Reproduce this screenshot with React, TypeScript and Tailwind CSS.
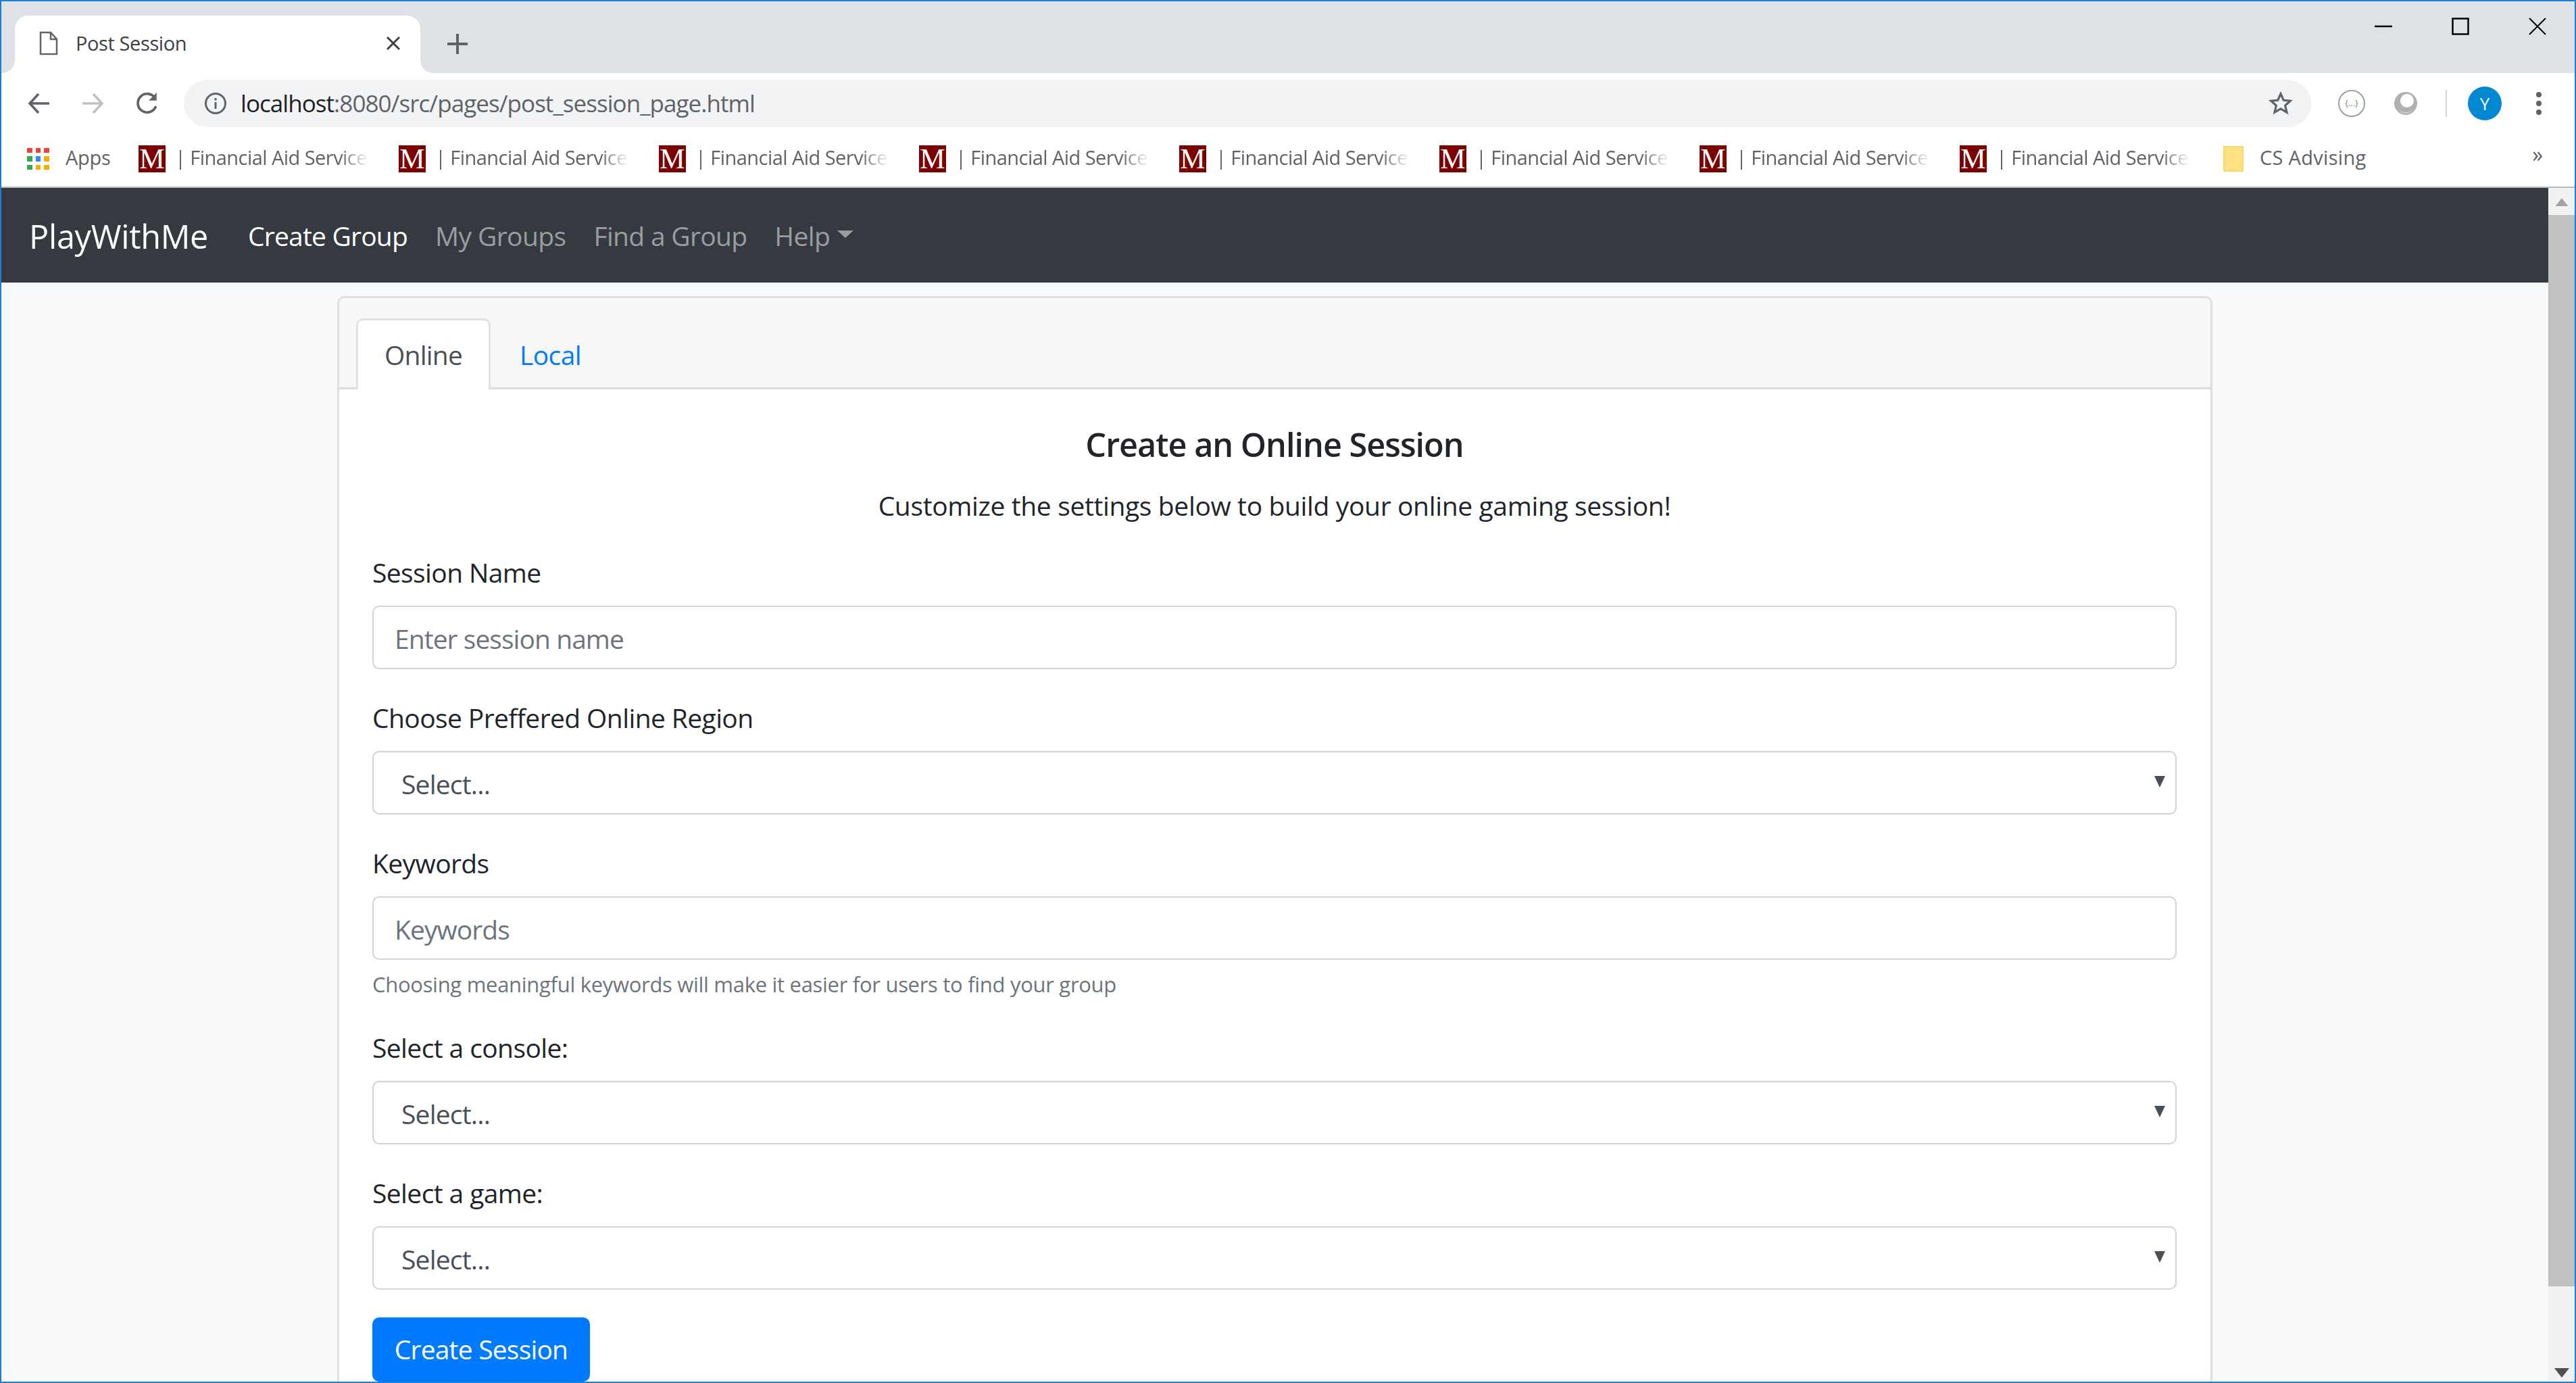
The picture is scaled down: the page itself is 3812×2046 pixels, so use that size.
const font = "font-['Open_Sans','Noto_Sans',sans-serif]"

function BookmarkM() {
  return (
    <div className="flex items-center w-[385px] shrink-0">
      <div className="w-[40px] h-[40px] bg-[#7d0000] flex items-center justify-center text-white font-['Liberation_Serif',serif] text-[42px] leading-none shrink-0">M</div>
      <span className="ml-[14px] w-[287px] pb-[4px] whitespace-nowrap text-[29px] tracking-[-0.55px] text-[#5f6368] [mask-image:linear-gradient(to_right,black_85%,transparent)]">| Financial Aid Service</span>
    </div>
  )
}

function AppsIcon() {
  const colors = ['#ef4136', '#ef4136', '#ef4136', '#34a853', '#2b8cf5', '#f9ab00', '#34a853', '#f9ab00', '#f9ab00']
  return (
    <div className="grid grid-cols-3 gap-[5px] w-[33px] shrink-0">
      {colors.map((c, i) => <span key={i} className="w-[7.5px] h-[7.5px]" style={{ background: c }} />)}
    </div>
  )
}

function ToolbarIcons() {
  return (
    <>
      <svg width="34" height="34" viewBox="0 0 34 34" className="ml-[39px] shrink-0" fill="none" stroke="#5f6368" strokeWidth="3.5"><path d="M32 17H3M16 3 3 17l13 14" /></svg>
      <svg width="34" height="34" viewBox="0 0 34 34" className="ml-[45px] shrink-0" fill="none" stroke="#bdc1c6" strokeWidth="3.5"><path d="M2 17h29M18 3l13 14-13 14" /></svg>
      <svg width="36" height="36" viewBox="0 0 34 34" className="ml-[46px] shrink-0" fill="none" stroke="#5f6368" strokeWidth="3.5"><path d="M29 21a13 13 0 1 1-1-11" /><path d="M30 2v11H19" fill="#5f6368" stroke="none" /></svg>
    </>
  )
}

function FormLabel({ children }: { children: React.ReactNode }) {
  return <label className="block h-[58px] mb-[20px] text-[39px] leading-[58px] tracking-[-0.6px] text-[#212529]">{children}</label>
}

function TextField({ placeholder }: { placeholder: string }) {
  return (
    <input
      placeholder={placeholder}
      className="block w-full h-[94px] px-[31px] pt-[3px] bg-white border-[2.5px] border-[#ced4da] rounded-[10px] text-[39px] tracking-[-0.95px] text-[#495057] placeholder-[#6c757d] outline-none"
    />
  )
}

function SelectField() {
  return (
    <div className="relative h-[94px]">
      <select className="block w-full h-full pl-[41px] pt-[4px] bg-white border-[2.5px] border-[#ced4da] rounded-[10px] text-[39px] tracking-[-0.8px] text-[#495057] appearance-none outline-none">
        <option>Select...</option>
      </select>
      <svg width="16" height="17" viewBox="0 0 16 17" className="absolute right-[17px] top-[37px]"><path d="M0 0h16L8 17z" fill="#495057" /></svg>
    </div>
  )
}

export default function App() {
  return (
    <div className={`${font} w-[3812px] h-[2046px] overflow-hidden flex flex-col border-[2px] border-[#1a7fd6] bg-white`}>
      {/* tab strip */}
      <div className="h-[106px] shrink-0 bg-[#dee1e6] flex items-end pl-[20px] relative">
        <div className="relative w-[600px] h-[85px] bg-white rounded-t-[20px] flex items-center pl-[36px] pr-[28px] pb-[3px]">
          <svg width="28" height="36" viewBox="0 0 28 36" fill="none" stroke="#5f6368" strokeWidth="2.5" className="shrink-0"><path d="M2 2h15l9 10v22H2zM17 2v10h9" /></svg>
          <span className="ml-[26px] text-[29px] tracking-[-0.4px] text-[#3c4043]">Post Session</span>
          <svg width="24" height="24" viewBox="0 0 24 24" className="ml-auto" fill="none" stroke="#3c4043" strokeWidth="3"><path d="M3 3l18 18M21 3 3 21" /></svg>
          <svg width="20" height="20" viewBox="0 0 20 20" className="absolute left-[-20px] bottom-0"><path d="M20 0v20H0C12 20 20 12 20 0z" fill="#fff" /></svg>
          <svg width="20" height="20" viewBox="0 0 20 20" className="absolute right-[-20px] bottom-0"><path d="M0 0v20h20C8 20 0 12 0 0z" fill="#fff" /></svg>
        </div>
        <svg width="32" height="32" viewBox="0 0 32 32" className="ml-[39px] mb-[27px]" fill="none" stroke="#5f6368" strokeWidth="4"><path d="M16 1v30M1 16h30" /></svg>
        <div className="absolute right-[42px] top-[24px] flex items-center">
          <svg width="26" height="26" viewBox="0 0 26 26" className="mr-[88px]" stroke="#000" strokeWidth="2.5"><path d="M0 13h26" /></svg>
          <svg width="26" height="26" viewBox="0 0 26 26" className="mr-[88px]" fill="none" stroke="#000" strokeWidth="2.5"><path d="M1.5 1.5h23v23h-23z" /></svg>
          <svg width="26" height="26" viewBox="0 0 26 26" stroke="#000" strokeWidth="2"><path d="M1 1l24 24M25 1 1 25" /></svg>
        </div>
      </div>

      {/* toolbar */}
      <div className="h-[90px] shrink-0 bg-white flex items-center">
        <ToolbarIcons />
        <div className="ml-[36px] w-[3148px] h-[70px] rounded-[35px] bg-[#f1f3f4] flex items-center pl-[30px] pr-[26px] shrink-0">
          <svg width="34" height="34" viewBox="0 0 34 34" fill="none" stroke="#5f6368" strokeWidth="3"><circle cx="17" cy="17" r="14.5" /><path d="M17 15v10M17 9v3.5" /></svg>
          <span className="ml-[20px] text-[35px] tracking-[-0.95px] text-[#202124]">localhost<span className="text-[#5f6368]">:8080/src/pages/post_session_page.html</span></span>
          <svg width="38" height="38" viewBox="0 0 24 24" className="ml-auto" fill="none" stroke="#5f6368" strokeWidth="2"><path d="m12 3 2.7 6 6.3.6-4.8 4.3 1.5 6.5L12 17l-5.7 3.4 1.5-6.5L3 9.6 9.3 9z" /></svg>
        </div>
        <div className="ml-[40px] w-[40px] h-[40px] rounded-full border-[2px] border-[#9aa0a6] flex items-center justify-center text-[13px] text-[#80868b] shrink-0">{'{...}'}</div>
        <svg width="36" height="40" viewBox="0 0 36 40" className="ml-[42px] shrink-0"><circle cx="18" cy="20" r="17" fill="#b0b0b0" /><ellipse cx="20" cy="16" rx="10" ry="10" fill="#fff" /><path d="M6 28a17 17 0 0 0 24 0 14 14 0 0 1-24 0z" fill="#d0d0d0" /></svg>
        <div className="ml-[41px] w-[2px] h-[40px] bg-[#d5d7da] shrink-0" />
        <div className="ml-[31px] w-[50px] h-[50px] rounded-full bg-[#0288d1] flex items-center justify-center text-white text-[26px] shrink-0">Y</div>
        <div className="ml-[51px] flex flex-col gap-[5px] shrink-0">
          <span className="w-[8px] h-[8px] rounded-full bg-[#5f6368]" />
          <span className="w-[8px] h-[8px] rounded-full bg-[#5f6368]" />
          <span className="w-[8px] h-[8px] rounded-full bg-[#5f6368]" />
        </div>
      </div>

      {/* bookmarks */}
      <div className="h-[80px] shrink-0 bg-white border-b-[2px] border-[#b9babd] flex items-center pl-[38px] pb-[4px] relative">
        <AppsIcon />
        <span className="ml-[24px] w-[108px] pb-[4px] text-[29px] tracking-[-0.3px] text-[#5f6368] shrink-0">Apps</span>
        {[0, 1, 2, 3, 4, 5, 6, 7].map((i) => <BookmarkM key={i} />)}
        <svg width="30" height="40" viewBox="0 0 30 40" className="ml-[5px] shrink-0" fill="#ffe082" stroke="#fbd66a" strokeWidth="2"><path d="M1 2h28v36H1z" /></svg>
        <span className="ml-[24px] pb-[4px] text-[29px] tracking-[0.3px] text-[#5f6368]">CS Advising</span>
        <span className="absolute right-[47px] top-[14px] text-[32px] leading-none text-[#5f6368]">»</span>
      </div>

      {/* page */}
      <div className="flex-1 min-h-0 flex">
        <div className="flex-1 min-w-0 bg-[#f8f9fa] flex flex-col">
          <nav className="h-[140px] pt-[3px] shrink-0 bg-[#343a40] flex items-center pl-[41px]">
            <span className="text-[48.6px] tracking-[-0.3px] text-white">PlayWithMe</span>
            <span className="ml-[59px] text-[39px] tracking-[-0.8px] text-white">Create Group</span>
            <span className="ml-[41px] text-[39px] tracking-[-0.6px] text-[#9a9da0]">My Groups</span>
            <span className="ml-[41px] text-[39px] tracking-[-0.7px] text-[#9a9da0]">Find a Group</span>
            <span className="ml-[41px] text-[39px] tracking-[-0.6px] text-[#9a9da0]">Help</span>
            <span className="ml-[11px] w-0 h-0 border-x-[12px] border-x-transparent border-t-[11px] border-t-[#9a9da0] mb-[6px]" />
          </nav>

          <div className="mt-[20px] ml-[497px] w-[2775px] flex-1 min-h-0 bg-white border-x-[3px] border-t-[3px] border-[#dfdfdf] rounded-t-[10px] overflow-hidden">
            <div className="h-[135px] bg-[#f7f7f7] border-b-[3px] border-[#dcdcdc] flex items-end pl-[25px]">
              <div className="w-[199px] h-[105px] -mb-[3px] bg-white border-x-[3px] border-t-[3px] border-[#dee2e6] rounded-t-[10px] flex items-center justify-center text-[39px] tracking-[-0.8px] text-[#495057]">Online</div>
              <div className="w-[88px] ml-[43px] h-[105px] -mb-[3px] pt-[3px] flex items-center text-[39px] tracking-[-0.6px] text-[#007bff]">Local</div>
            </div>
            <div className="pl-[49px] pr-[50px] pt-[47px]">
              <h4 className="text-center text-[48.6px] leading-[68px] font-semibold tracking-[-1px] text-[#212529]">Create an Online Session</h4>
              <p className="mt-[28px] text-center text-[39px] leading-[58px] tracking-[-0.36px] text-[#212529]">Customize the settings below to build your online gaming session!</p>
              <div className="mt-[41px]">
                <FormLabel>Session Name</FormLabel>
                <TextField placeholder="Enter session name" />
              </div>
              <div className="mt-[43px]">
                <FormLabel>Choose Preffered Online Region</FormLabel>
                <SelectField />
              </div>
              <div className="mt-[43px]">
                <FormLabel>Keywords</FormLabel>
                <TextField placeholder="Keywords" />
                <p className="mt-[13px] text-[31px] leading-[47px] tracking-[-0.3px] text-[#6c757d]">Choosing meaningful keywords will make it easier for users to find your group</p>
              </div>
              <div className="mt-[41px]">
                <FormLabel>Select a console:</FormLabel>
                <SelectField />
              </div>
              <div className="mt-[43px]">
                <FormLabel>Select a game:</FormLabel>
                <SelectField />
              </div>
              <button className="mt-[41px] w-[322px] h-[95px] bg-[#007bff] rounded-[10px] text-[39px] tracking-[-0.8px] text-white">Create Session</button>
            </div>
          </div>
        </div>

        {/* scrollbar */}
        <div className="w-[39px] shrink-0 bg-[#f1f1f1] flex flex-col items-center relative">
          <svg width="22" height="12" viewBox="0 0 22 14" className="mt-[15px]"><path d="M11 0 22 14H0z" fill="#a3a3a3" /></svg>
          <div className="mt-[13px] w-full h-[1585px] bg-[#c1c1c1]" />
          <svg width="22" height="14" viewBox="0 0 22 14" className="absolute bottom-[6px]"><path d="M0 0h22L11 14z" fill="#505050" /></svg>
        </div>
      </div>
    </div>
  )
}
